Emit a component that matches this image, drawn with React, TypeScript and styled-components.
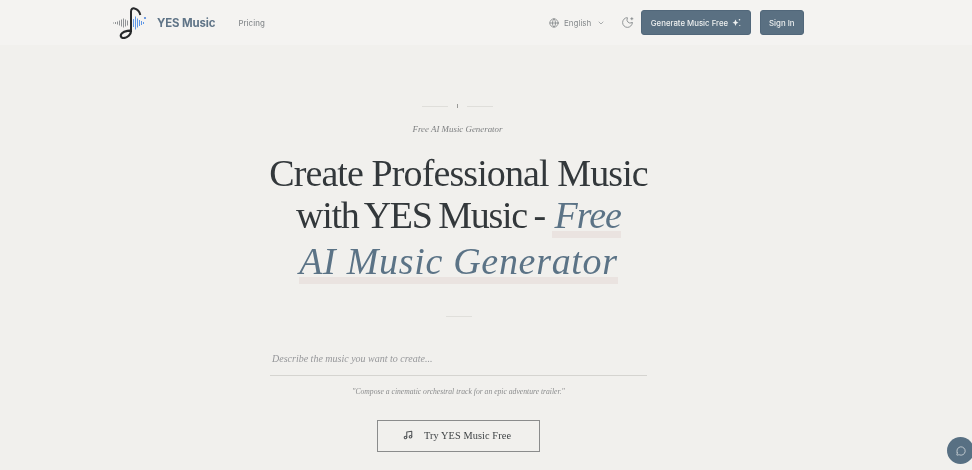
import React from "react";
import styled, { createGlobalStyle } from "styled-components";
import { Globe, ChevronDown, MoonStar, Music, MessageCircle } from "lucide-react";

const Global = createGlobalStyle`
  html, body { margin: 0; padding: 0; background: #f1f0ed; height: 470px; overflow: hidden; }
  * { box-sizing: border-box; }
`;
const Page = styled.div`
  width: 972px; height: 470px; overflow: hidden; background: #f1f0ed; position: relative;
  filter: blur(0.4px);
`;
const Header = styled.header`
  height: 45px; background: #f4f3f1; display: flex; align-items: center;
  padding: 0 168px 0 113px; font-family: Inter, "Liberation Sans", sans-serif;
`;
const Brand = styled.div`display: flex; align-items: center; gap: 9px;`;
const BrandName = styled.span`font-size: 11.4px; font-weight: 700; color: #5f7487; letter-spacing: -0.1px;`;
const NavLink = styled.span`font-size: 7.8px; font-weight: 500; color: #888c8f; margin-left: 23px; letter-spacing: 0.05px;`;
const Right = styled.div`margin-left: auto; display: flex; align-items: center;`;
const Lang = styled.div`display: flex; align-items: center; color: #85898c; font-size: 8px; margin-right: 16px;`;
const LangLabel = styled.span`margin: 0 6px 0 5px;`;
const ThemeBtn = styled.span`display: flex; color: #7d8184; margin-right: 7px;`;
const Cta = styled.button<{ $ml?: number }>`
  height: 25px; padding: 0 8.5px; margin-left: ${p => p.$ml ?? 0}px; border: 1px solid #51677a; border-radius: 3px; background: #5a7082;
  color: #eef0f0; font: 500 7.8px Inter, "Liberation Sans", sans-serif; display: flex; align-items: center; gap: 4px;
`;
const Hero = styled.main`
  padding: 0 168px 0 113px; display: flex; flex-direction: column; align-items: center;
  font-family: "Liberation Serif", serif;
`;
const Ornament = styled.div`margin: 59px 2px 0 0; display: flex; align-items: center; gap: 6px; height: 4px;`;
const OrnLine = styled.span`width: 26px; height: 1px; background: #dfdeda;`;
const OrnTick = styled.span`width: 1px; height: 4px; background: #9a9a98; margin: 0 3px;`;
const Eyebrow = styled.div`margin: 15px 2px 0 0; font-size: 8.9px; line-height: 12px; font-style: italic; color: #7d7f80;`;
const Title = styled.h1`
  margin: 17px 0 0; font-size: 38px; font-weight: 400; text-align: center; color: #33383b;
  line-height: 42px; letter-spacing: -0.9px; width: 440px;
`;
const Lead = styled.span`letter-spacing: -1.3px; word-spacing: -1.5px;`;
const Accent = styled.span<{ $spacing: number; $top: number; $pad: number }>`
  display: inline-block; font-style: italic; color: #5b7386; letter-spacing: ${p => p.$spacing}px;
  margin-top: ${p => p.$top}px; margin-bottom: -2px; padding: 0 0 2px ${p => p.$pad}px;
  background: linear-gradient(#eae3e0, #eae3e0) left bottom / 100% 7px no-repeat;
`;
const Divider = styled.div`width: 26px; height: 1px; background: #e0dfdb; margin-top: 34px;`;
const InputWrap = styled.div`
  width: 377px; margin-top: 33px; height: 26px; padding-left: 2px; border-bottom: 1px solid #d5d4d0;
  font-size: 10px; font-style: italic; color: #96979a; line-height: 17px;
`;
const Example = styled.div`margin-top: 10px; font-size: 7.65px; line-height: 11px; font-style: italic; color: #8b8c8d;`;
const TryBtn = styled.button`
  margin: 23px 0 0; width: 163px; height: 32px; background: transparent; border: 1px solid #8b8c8c; border-radius: 0;
  display: flex; align-items: center; justify-content: center; gap: 11px; padding: 0 3px 2px 0;
  font: 400 10.3px "Liberation Serif", serif; color: #3f4345; letter-spacing: 0.1px;
`;
const Chat = styled.div`
  position: absolute; left: 947px; top: 437px; width: 27px; height: 27px; border-radius: 50%;
  background: #587083; color: #eef0f0; display: flex; align-items: center; justify-content: center;
`;

const Logo = () => (
  <svg width="35" height="32" viewBox="0 0 35 32" fill="none">
    <g strokeLinecap="butt" strokeWidth="1">
      {[[0.5,.5],[2.5,1],[4.5,1.5],[6.5,2.5],[8.5,3.5],[10.5,4.5],[12.5,3.5],[14.5,2.5]].map(([x,h]) => (
        <line key={x} x1={x} x2={x} y1={16-h} y2={16+h} stroke="#8f9295" />
      ))}
      {[[20.5,4],[22.5,6.5],[24.5,4.5],[26.5,3],[28.5,2],[30.5,1]].map(([x,h]) => (
        <line key={x} x1={x} x2={x} y1={16-h} y2={16+h} stroke="#5f97e6" />
      ))}
    </g>
    <circle cx="32" cy="11" r="1.100" fill="#4f86dc" />
    <path d="M18 25V4.500c0-2.500 1.500-3.500 3.500-3 3 .7 5 2.700 5.800 6.500" stroke="#26282a" strokeWidth="2" />
    <path d="M18 24c0 3.500-3.500 7-7.500 7-3 0-3.500-3-1.500-4.800 2.500-2.300 9-3.200 9-2.200z" stroke="#26282a" strokeWidth="2.200" />
  </svg>
);

const Spark = () => (
  <svg width="9" height="9" viewBox="0 0 9 9" fill="currentColor">
    <path d="M3.500 1.500 4.500 3.800 6.500 4.700 4.500 5.600 3.500 8 2.500 5.600 .5 4.700 2.500 3.800z" />
    <circle cx="7.500" cy="1.800" r=".8" />
    <circle cx="7.800" cy="7.500" r=".6" />
  </svg>
);

export default function App() {
  return (
    <Page>
      <Global />
      <Header>
        <Brand><Logo /><BrandName>YES Music</BrandName></Brand>
        <NavLink>Pricing</NavLink>
        <Right>
          <Lang><Globe size={10} strokeWidth={2} /><LangLabel>English</LangLabel><ChevronDown size={8} /></Lang>
          <ThemeBtn><MoonStar size={13} strokeWidth={1.5} /></ThemeBtn>
          <Cta>Generate Music Free <Spark /></Cta>
          <Cta $ml={9}>Sign In</Cta>
        </Right>
      </Header>
      <Hero>
        <Ornament><OrnLine /><OrnTick /><OrnLine /></Ornament>
        <Eyebrow>Free AI Music Generator</Eyebrow>
        <Title>
          Create Professional Music <Lead>with YES Music - </Lead><Accent $spacing={-1} $top={0} $pad={3}>Free</Accent>{" "}
          <Accent $spacing={0.7} $top={4} $pad={0}>AI Music Generator</Accent>
        </Title>
        <Divider />
        <InputWrap>Describe the music you want to create...</InputWrap>
        <Example>"Compose a cinematic orchestral track for an epic adventure trailer."</Example>
        <TryBtn><Music size={10} strokeWidth={2.6} color="#55585a" />Try YES Music Free</TryBtn>
      </Hero>
      <Chat><MessageCircle size={10} strokeWidth={1.6} /></Chat>
    </Page>
  );
}
